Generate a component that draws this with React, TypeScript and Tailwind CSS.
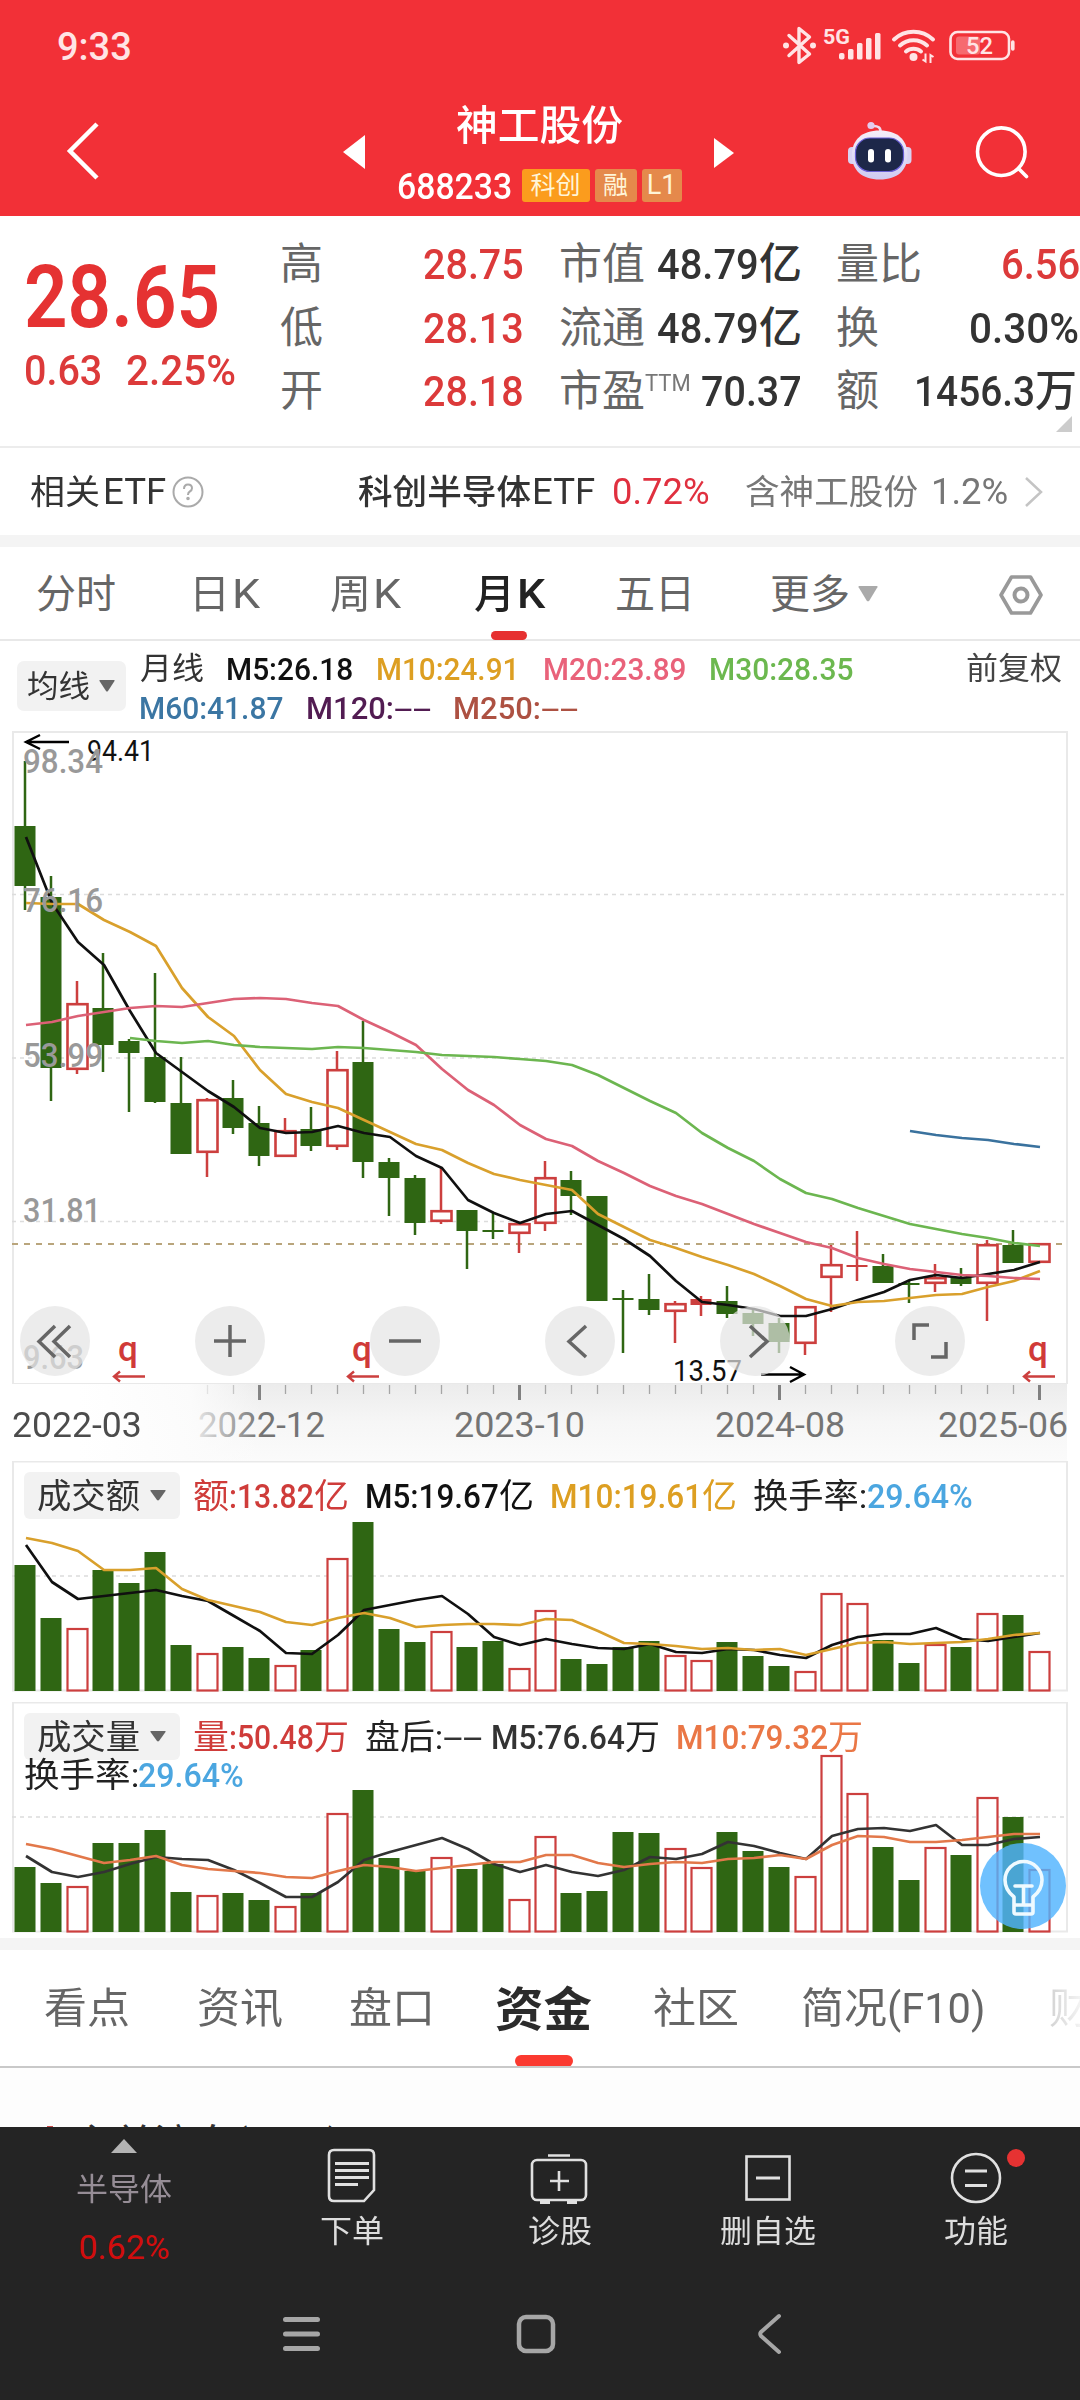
import { useLayoutEffect, useRef, type ReactNode } from "react";

/** A single line of text, stretched horizontally to fill the width of its box. */
function Fit({ className = "", children }: { className?: string; children: ReactNode }) {
  const outer = useRef<HTMLSpanElement>(null);
  const inner = useRef<HTMLSpanElement>(null);
  useLayoutEffect(() => {
    const o = outer.current;
    const i = inner.current;
    if (!o || !i) return;
    i.style.transform = `scaleX(${o.clientWidth / i.offsetWidth})`;
  });
  return (
    <span ref={outer} className={`block shrink-0 whitespace-nowrap leading-none ${className}`}>
      <span ref={inner} className="inline-block origin-left align-top leading-none">
        {children}
      </span>
    </span>
  );
}

function Caret({ className = "" }: { className?: string }) {
  return (
    <svg viewBox="0 0 16 12" className={className} fill="currentColor" preserveAspectRatio="none">
      <path d="M1 0h14q1 0 .5 1L9 11q-1 1-2 0L.5 1Q0 0 1 0z" />
    </svg>
  );
}

/* ---------- header ---------- */

function StatusIcons() {
  return (
    <svg width="240" height="50" viewBox="780 20 240 50" fill="none" stroke="#ffe4e5" className="shrink-0">
      <path d="M789 35.5l20.500 18.500-10.500 8.500v-34l10.500 8.500-20.500 18.500" strokeWidth="3.400" strokeLinejoin="round" strokeLinecap="round" />
      <g fill="#ffe4e5" stroke="none">
        <circle cx="786" cy="45.500" r="3" />
        <circle cx="813" cy="45.500" r="3" />
        <text x="823" y="44" fontSize="21" fontWeight="700" textLength="27" lengthAdjust="spacingAndGlyphs">5G</text>
        <rect x="839" y="53" width="5.500" height="6.500" rx="2" />
        <rect x="848" y="49" width="5.500" height="10.500" rx="1.500" />
        <rect x="857" y="43" width="5.500" height="16.500" rx="1.500" />
        <rect x="866" y="38" width="5.500" height="21.500" rx="1.500" />
        <rect x="875" y="33" width="5.500" height="26.500" rx="1.500" />
        <circle cx="913.500" cy="57" r="4" />
        <path d="M925.500 53.500v8l-3-2M930.500 63v-8l3 2" stroke="#ffe4e5" strokeWidth="2" fill="none" />
      </g>
      <path d="M894 39.500a28.500 28.500 0 0 1 39 0M900 45.500a20 20 0 0 1 27 0M906 51.500a11.500 11.500 0 0 1 15 0" strokeWidth="4" strokeLinecap="round" />
      <rect x="950.500" y="32" width="58.500" height="27" rx="7" strokeWidth="2.600" />
      <rect x="956" y="36.500" width="24" height="18" rx="3" fill="#f66a6f" stroke="none" />
      <path d="M1012.800 42v7" strokeWidth="3.600" strokeLinecap="round" />
      <text x="966" y="54" fontSize="24" fontWeight="500" fill="#ffe4e5" stroke="none" textLength="27" lengthAdjust="spacingAndGlyphs">52</text>
    </svg>
  );
}

function Robot() {
  return (
    <svg width="66" height="66" viewBox="846 118 66 66" className="shrink-0">
      <defs>
        <linearGradient id="shell" x1="0" y1="0" x2="0" y2="1">
          <stop offset="0" stopColor="#f6eef8" />
          <stop offset="1" stopColor="#cfcaf2" />
        </linearGradient>
      </defs>
      <path d="M880.500 132q.5-6.500-8-6" fill="none" stroke="#efd9ee" strokeWidth="2.600" />
      <circle cx="871" cy="125.500" r="3.600" fill="#e3cbee" />
      <rect x="848" y="147" width="9" height="17" rx="4" fill="#d9d2f2" />
      <rect x="902.500" y="147" width="9" height="17" rx="4" fill="#d9d2f2" />
      <path d="M879.700 130.500c18 0 27.800 9.500 27.800 24.500s-9.800 24.500-27.800 24.500-27.800-9.500-27.800-24.500 9.800-24.500 27.800-24.500z" fill="url(#shell)" />
      <rect x="855.500" y="138" width="48" height="33.500" rx="14.500" fill="#1d2749" stroke="#6a5fd6" strokeWidth="1.200" />
      <rect x="868" y="149" width="6" height="13.500" rx="3" fill="#fff" />
      <rect x="885" y="149" width="6" height="13.500" rx="3" fill="#fff" />
    </svg>
  );
}

function Header() {
  return (
    <header className="h-[216px] bg-[#f23037] text-white">
      <div className="flex h-[88px] items-center justify-between pl-[57px] pr-[60px] pt-[5px]">
        <Fit className="w-[75px] text-[38px] font-medium text-[#ffe4e5]">9:33</Fit>
        <div className="-mt-[4px]"><StatusIcons /></div>
      </div>
      <div className="flex h-[128px] items-start">
        <svg width="36" height="60" viewBox="0 0 36 60" className="ml-[64px] mt-[33px]" fill="none" stroke="#fff" strokeWidth="4.500">
          <path d="M33 3L6 30l27 27" />
        </svg>
        <svg width="22" height="34" viewBox="0 0 22 34" className="ml-[243px] mt-[47px]" fill="#fff"><path d="M22 0v34L0 17z" /></svg>
        <div className="ml-[31px] flex w-[286px] flex-col items-center">
          <Fit className="mt-[18px] w-[167px] text-[41px] font-medium">神工股份</Fit>
          <div className="mt-[22px] flex h-[33px] items-center">
            <Fit className="mt-px w-[115px] text-[37px] font-medium">688233</Fit>
            <span className="ml-[10px] flex h-[33px] w-[68px] items-center justify-center rounded-[3px] bg-[#fb9c1d] text-[25px] leading-none text-[#fff5d8]">科创</span>
            <span className="ml-[5px] flex h-[33px] w-[42px] items-center justify-center rounded-[3px] bg-[#e5894b] text-[25px] leading-none text-[#fff5d8]">融</span>
            <span className="ml-[5px] flex h-[33px] w-[40px] items-center justify-center rounded-[3px] bg-[#e5894b] text-[27px] leading-none text-[#fff5d8]">L1</span>
          </div>
        </div>
        <svg width="20" height="30" viewBox="0 0 20 30" className="ml-[32px] mt-[50px]" fill="#fff"><path d="M0 0v30l20-15z" /></svg>
        <div className="ml-[112px] mt-[30px]"><Robot /></div>
        <svg width="60" height="60" viewBox="972 122 60 60" className="ml-[60px] mt-[34px]" fill="none" stroke="#fff" strokeWidth="3.600" strokeLinecap="round">
          <circle cx="1001.300" cy="151.700" r="23.800" />
          <path d="M1018.500 168.500l8 8" />
        </svg>
      </div>
    </header>
  );
}

/* ---------- quote ---------- */

function Quote() {
  return (
    <section className="relative flex h-[232px] border-b-2 border-[#ececec] text-[43px] text-[#333]">
      <div className="w-[280px] pl-[24px] text-[#e53232]">
        <Fit className="mt-[37px] w-[196px] text-[88px] font-semibold">28.65</Fit>
        <div className="mt-[8px] flex text-[43px] font-medium text-[#dc3a3a]">
          <Fit className="w-[78px]">0.63</Fit>
          <Fit className="ml-[24px] w-[110px]">2.25%</Fit>
        </div>
      </div>
      <div className="flex flex-col pt-[17px] font-medium text-[#dc3a3a]">
        {[["高", "28.75"], ["低", "28.13"], ["开", "28.18"]].map(([k, v]) => (
          <div key={k} className="flex h-[63.500px] items-center">
            <Fit className="w-[43px] font-normal text-[#666]">{k}</Fit>
            <Fit className="ml-[100px] w-[101px]">{v}</Fit>
          </div>
        ))}
      </div>
      <div className="ml-[35px] flex flex-col pt-[17px] font-medium">
        {["市值", "流通"].map((k) => (
          <div key={k} className="flex h-[63.500px] items-center">
            <Fit className="w-[86px] font-normal text-[#666]">{k}</Fit>
            <Fit className="ml-[12px] w-[102px]">48.79</Fit>
            <Fit className="w-[43px]">亿</Fit>
          </div>
        ))}
        <div className="flex h-[63.500px] items-center">
          <Fit className="w-[86px] font-normal text-[#666]">市盈</Fit>
          <Fit className="-mt-[16px] w-[46px] text-[23px] font-normal text-[#777]">TTM</Fit>
          <Fit className="ml-[10px] w-[101px]">70.37</Fit>
        </div>
      </div>
      <div className="ml-[34px] flex flex-col pt-[17px] font-medium">
        <div className="flex h-[63.500px] items-center">
          <Fit className="w-[86px] font-normal text-[#666]">量比</Fit>
          <Fit className="ml-[79px] w-[79px] text-[#dc3a3a]">6.56</Fit>
        </div>
        <div className="flex h-[63.500px] items-center">
          <Fit className="w-[43px] font-normal text-[#666]">换</Fit>
          <Fit className="ml-[90px] w-[110px]">0.30%</Fit>
        </div>
        <div className="flex h-[63.500px] items-center">
          <Fit className="w-[43px] font-normal text-[#666]">额</Fit>
          <Fit className="ml-[35px] w-[121px]">1456.3</Fit>
          <Fit className="w-[42px]">万</Fit>
        </div>
      </div>
      <svg width="16" height="16" viewBox="0 0 16 16" className="absolute left-[1056px] top-[200px]" fill="#ccc"><path d="M16 0v16H0z" /></svg>
    </section>
  );
}

function EtfRow() {
  return (
    <section className="flex h-[87px] items-center pt-px text-[36px] text-[#333]">
      <Fit className="ml-[30px] w-[70px] text-[34px]">相关</Fit>
      <Fit className="ml-[3px] w-[63px]">ETF</Fit>
      <svg width="32" height="32" viewBox="0 0 32 32" className="ml-[6px]" fill="none" stroke="#aaa" strokeWidth="2">
        <circle cx="16" cy="16" r="14.500" />
        <path d="M12 13q0-4.500 4-4.500t4 3.800q0 2-2.200 3.200-1.800 1-1.800 3.500" />
        <circle cx="16" cy="22.500" r=".8" fill="#aaa" />
      </svg>
      <Fit className="ml-[154px] w-[173px] text-[34px] font-medium">科创半导体</Fit>
      <Fit className="ml-[1px] w-[63px]">ETF</Fit>
      <Fit className="ml-[17px] w-[98px] text-[#e0303f]">0.72%</Fit>
      <Fit className="ml-[35px] w-[173px] text-[34px] text-[#777]">含神工股份</Fit>
      <Fit className="ml-[13px] w-[77px] text-[#777]">1.2%</Fit>
      <svg width="20" height="32" viewBox="0 0 20 32" className="ml-[16px]" fill="none" stroke="#c4c4c4" strokeWidth="2.500"><path d="M2 2l15 14L2 30" /></svg>
    </section>
  );
}

/* ---------- period tabs and MA legend ---------- */

function PeriodTabs() {
  return (
    <nav className="relative flex h-[94px] items-center border-b-2 border-[#e8e8e8] pt-[3px] text-[40px] text-[#666]">
      <Fit className="ml-[36px] w-[80px]">分时</Fit>
      <Fit className="ml-[73px] w-[41px]">日</Fit>
      <Fit className="ml-[2px] w-[28px]">K</Fit>
      <Fit className="ml-[70px] w-[41px]">周</Fit>
      <Fit className="ml-[2px] w-[28px]">K</Fit>
      <Fit className="ml-[73px] w-[41px] font-medium text-[#222]">月</Fit>
      <Fit className="ml-[2px] w-[28px] font-medium text-[#222]">K</Fit>
      <Fit className="ml-[70px] w-[80px]">五日</Fit>
      <Fit className="ml-[75px] w-[80px]">更多</Fit>
      <Caret className="-mt-px ml-[8px] h-[16px] w-[20px] text-[#aaa]" />
      <svg width="44" height="42" viewBox="0 0 44 42" className="ml-[121px]" fill="none" stroke="#999" strokeWidth="3.600" strokeLinejoin="round">
        <path d="M12.500 3h19L42 21 31.500 39h-19L2 21z" />
        <circle cx="22" cy="21" r="6.500" strokeWidth="4" />
      </svg>
      <span className="absolute left-[491px] top-[84px] h-[9px] w-[36px] rounded-full bg-[#e63030]" />
    </nav>
  );
}

function MaLegend() {
  return (
    <div className="flex h-[90px] items-start text-[32px] font-medium">
      <div className="ml-[17px] mt-[20px] flex h-[50px] w-[109px] items-center rounded-[7px] bg-[#f2f2f2] text-[#333]">
        <Fit className="ml-[10px] w-[63px] text-[31px] font-normal">均线</Fit>
        <Caret className="ml-[9px] h-[12px] w-[16px] text-[#666]" />
      </div>
      <div className="ml-[14px] w-[800px]">
        <div className="mt-[12px] flex">
          <Fit className="w-[64px] text-[31px] font-normal text-[#333]">月线</Fit>
          <Fit className="ml-[22px] w-[127px] text-[#111]">M5:26.18</Fit>
          <Fit className="ml-[23px] w-[143px] text-[#dd9f22]">M10:24.91</Fit>
          <Fit className="ml-[24px] w-[143px] text-[#e9627a]">M20:23.89</Fit>
          <Fit className="ml-[23px] w-[144px] text-[#6cb84f]">M30:28.35</Fit>
        </div>
        <div className="mt-[7px] flex">
          <Fit className="-ml-px w-[144px] text-[#3b76a3]">M60:41.87</Fit>
          <Fit className="ml-[23px] w-[88px] text-[#521c52]">M120:</Fit>
          <Fit className="w-[38px] font-normal text-[#521c52]">--</Fit>
          <Fit className="ml-[21px] w-[88px] text-[#ad5142]">M250:</Fit>
          <Fit className="w-[38px] font-normal text-[#ad5142]">--</Fit>
        </div>
      </div>
      <Fit className="ml-[26px] mt-[12px] w-[96px] text-[31px] font-normal text-[#444]">前复权</Fit>
    </div>
  );
}

/* ---------- charts ---------- */

const X = (i: number) => 25 + 26 * i;
const GREEN = "#2f6613";
const RED = "#cc3f3e";

// [rising, high, body top, body bottom, low]
const candles: [number, number, number, number, number][] = [
  [0, 761, 826, 886, 910], [0, 876, 897, 1068, 1101], [1, 981, 1003, 1070, 1074], [0, 953, 1008, 1045, 1072],
  [0, 1039, 1041, 1053, 1112], [0, 973, 1057, 1102, 1103], [0, 1057, 1103, 1154, 1154], [1, 1098, 1099, 1153, 1177],
  [0, 1080, 1098, 1128, 1134], [0, 1106, 1123, 1156, 1166], [1, 1118, 1130, 1157, 1157], [0, 1107, 1129, 1146, 1151],
  [1, 1051, 1069, 1147, 1150], [0, 1021, 1062, 1162, 1178], [0, 1158, 1162, 1178, 1216], [0, 1175, 1178, 1223, 1235],
  [1, 1167, 1210, 1222, 1224], [0, 1210, 1210, 1231, 1269], [0, 1213, 1230, 1232, 1239], [1, 1223, 1223, 1234, 1253],
  [1, 1161, 1177, 1224, 1231], [0, 1171, 1180, 1196, 1215], [0, 1196, 1196, 1301, 1301], [0, 1290, 1298, 1300, 1353],
  [0, 1274, 1299, 1310, 1315], [1, 1301, 1303, 1312, 1343], [1, 1296, 1299, 1305, 1316], [0, 1286, 1301, 1314, 1318],
  [0, 1310, 1313, 1324, 1336], [0, 1318, 1323, 1342, 1353], [1, 1306, 1306, 1344, 1355], [1, 1245, 1264, 1278, 1312],
  [1, 1231, 1265, 1267, 1281], [0, 1254, 1266, 1283, 1283], [0, 1280, 1283, 1285, 1303], [1, 1264, 1277, 1284, 1292],
  [0, 1268, 1277, 1284, 1286], [1, 1240, 1244, 1284, 1321], [0, 1230, 1245, 1263, 1263], [1, 1243, 1243, 1263, 1263],
];

const ma5 = [837, 903, 942, 965, 1011, 1053, 1072, 1091, 1107, 1128, 1133, 1132, 1126, 1133, 1137, 1156, 1168, 1200, 1213, 1223, 1214, 1211, 1225, 1239, 1256, 1281, 1302, 1305, 1309, 1316, 1316, 1309, 1300, 1292, 1280, 1275, 1278, 1274, 1270, 1262];
const ma10 = [903, 904, 904, 920, 932, 946, 988, 1017, 1036, 1070, 1094, 1102, 1108, 1120, 1132, 1144, 1150, 1163, 1174, 1180, 1185, 1190, 1214, 1227, 1240, 1248, 1257, 1265, 1274, 1286, 1299, 1306, 1302, 1301, 1298, 1295, 1294, 1287, 1281, 1271];
const ma20 = [1025, 1022, 1016, 1012, 1008, 1006, 1007, 1003, 999, 998, 999, 1003, 1006, 1020, 1032, 1045, 1069, 1090, 1105, 1125, 1139, 1146, 1161, 1173, 1186, 1196, 1204, 1214, 1224, 1233, 1242, 1248, 1258, 1264, 1269, 1272, 1275, 1276, 1278, 1279];
const ma30 = [1038, 1041, 1043, 1041, 1045, 1047, 1048, 1049, 1047, 1048, 1050, 1052, 1055, 1056, 1057, 1059, 1061, 1065, 1075, 1088, 1101, 1113, 1133, 1148, 1161, 1179, 1193, 1199, 1208, 1216, 1224, 1229, 1234, 1238, 1243, 1246];
const ma60 = [1131, 1135, 1138, 1140, 1144, 1147];

const rising = [0, 0, 1, 0, 0, 0, 0, 1, 0, 0, 1, 0, 1, 0, 0, 0, 1, 0, 0, 1, 1, 0, 0, 0, 0, 1, 1, 0, 0, 0, 1, 1, 1, 0, 0, 1, 0, 1, 0, 1];

const turnover = [1565, 1618, 1628, 1570, 1583, 1552, 1645, 1653, 1647, 1658, 1665, 1650, 1558, 1522, 1629, 1642, 1631, 1647, 1641, 1668, 1610, 1659, 1664, 1647, 1641, 1655, 1660, 1642, 1656, 1666, 1671, 1593, 1603, 1640, 1663, 1644, 1647, 1613, 1615, 1651];
const turnover5 = [1545, 1582, 1599, 1596, 1593, 1590, 1596, 1601, 1616, 1631, 1653, 1654, 1635, 1610, 1605, 1600, 1596, 1614, 1637, 1645, 1639, 1644, 1648, 1649, 1644, 1652, 1653, 1649, 1650, 1655, 1658, 1645, 1637, 1634, 1634, 1628, 1639, 1641, 1637, 1633];
const turnover10 = [1538, 1543, 1551, 1570, 1570, 1568, 1589, 1600, 1606, 1612, 1622, 1625, 1618, 1613, 1618, 1627, 1625, 1624, 1624, 1625, 1619, 1620, 1631, 1643, 1644, 1646, 1649, 1648, 1650, 1649, 1655, 1649, 1643, 1642, 1644, 1643, 1642, 1639, 1635, 1633];

const volume = [1867, 1883, 1886, 1843, 1843, 1830, 1892, 1895, 1893, 1900, 1906, 1893, 1813, 1790, 1858, 1871, 1857, 1869, 1864, 1899, 1836, 1893, 1891, 1832, 1833, 1848, 1867, 1832, 1851, 1867, 1876, 1755, 1793, 1847, 1880, 1847, 1855, 1797, 1817, 1869];
const volume5 = [1856, 1872, 1877, 1872, 1864, 1857, 1859, 1860, 1870, 1883, 1897, 1897, 1882, 1860, 1852, 1845, 1838, 1849, 1864, 1872, 1865, 1872, 1876, 1870, 1857, 1859, 1854, 1842, 1846, 1853, 1859, 1836, 1829, 1828, 1831, 1825, 1845, 1845, 1839, 1837];
const volume10 = [1844, 1849, 1856, 1863, 1860, 1856, 1865, 1869, 1871, 1873, 1877, 1878, 1871, 1865, 1867, 1871, 1868, 1865, 1862, 1862, 1855, 1855, 1863, 1867, 1864, 1862, 1863, 1859, 1858, 1855, 1859, 1845, 1836, 1837, 1842, 1842, 1840, 1837, 1834, 1834];

function Line({ ys, from = 0, color }: { ys: number[]; from?: number; color: string }) {
  return (
    <polyline
      points={ys.map((y, i) => `${X(i + from) + 1},${y}`).join(" ")}
      fill="none"
      stroke={color}
      strokeWidth="2.700"
      strokeLinejoin="round"
    />
  );
}

function Label({ x, y, w, size, fill, children }: { x: number; y: number; w: number; size: number; fill: string; children: string }) {
  return (
    <text x={x} y={y} fontSize={size} fill={fill} textLength={w} lengthAdjust="spacingAndGlyphs">
      {children}
    </text>
  );
}

const controls = [
  "M35 20L19 35.500 35 51M50 20L34 35.500 50 51",
  "M35 19v32M19 35h32",
  "M19 35h32",
  "M41 20L24 35.500 41 51",
  "M30 20l17 15.500L30 51",
  "M19 34V19h15M36 51h15V36",
];

function PriceChart() {
  return (
    <section className="relative h-[653px]">
      <svg width="1080" height="653" viewBox="0 731 1080 653" className="block">
        <rect x="13" y="732" width="1054" height="652" fill="none" stroke="#e9e9e9" strokeWidth="2" />
        <g stroke="#dcdcdc" strokeWidth="1.300" strokeDasharray="4 4">
          <path d="M12 894.500H1066M12 1058H1066M12 1221.500H1066" />
        </g>
        <path d="M12 1244H1066" stroke="#b9a57c" strokeWidth="1.800" strokeDasharray="6 6" />
        {candles.map(([up, hi, top, bot, lo], i) => {
          const c = up ? RED : GREEN;
          const hollow = up && bot - top > 6;
          return (
            <g key={i} stroke={c} strokeWidth="2.500">
              <path d={`M${X(i)} ${hi}V${top}M${X(i)} ${bot}V${lo}`} />
              {hollow ? (
                <rect x={X(i) - 9.5} y={top + 1.2} width="20" height={bot - top - 2.4} fill="#fff" strokeWidth="2.600" />
              ) : (
                <rect x={X(i) - 10.5} y={top} width="21" height={bot - top} fill={c} stroke="none" />
              )}
            </g>
          );
        })}
        <Line ys={ma5} color="#101010" />
        <Line ys={ma10} color="#d9a02c" />
        <Line ys={ma20} color="#dc6176" />
        <Line ys={ma30} from={4} color="#6cb650" />
        <Line ys={ma60} from={34} color="#3a729e" />
        <g fill="none" stroke="#000" strokeWidth="2.400">
          <path d="M69 742H26M40 735L26 742l14 7" />
          <path d="M761 1374.500H804M790 1367l14 7.500-14 7.500" />
        </g>
        <Label x={87} y={761} w={67} size={30} fill="#111">94.41</Label>
        <Label x={673} y={1381} w={69} size={30} fill="#111">13.57</Label>
        <g fontWeight="500">
          <Label x={23} y={773} w={80} size={34} fill="#999">98.34</Label>
          <Label x={23} y={912} w={80} size={34} fill="#999">76.16</Label>
          <Label x={23} y={1067} w={80} size={34} fill="#999">53.99</Label>
          <Label x={23} y={1222} w={78} size={34} fill="#999">31.81</Label>
          <Label x={23} y={1369} w={61} size={34} fill="#999">9.63</Label>
        </g>
        {[4, 13, 39].map((i) => (
          <g key={i}>
            <text x={X(i) - 1} y="1361" textAnchor="middle" fontSize="35" fontWeight="500" fill="#d03a38">q</text>
            <path d={`M${X(i) + 16} 1376.500h-31m6-5l-6 5 6 5`} fill="none" stroke="#cc3f3e" strokeWidth="2.400" />
          </g>
        ))}
      </svg>
      <div className="absolute left-[20px] top-[575px] flex gap-[105px]">
        {controls.map((d) => (
          <button key={d} className="flex size-[70px] items-center justify-center rounded-full bg-[rgb(228_228_228/0.7)]">
            <svg width="70" height="70" viewBox="0 0 70 70" fill="none" stroke="#666" strokeWidth="3.500"><path d={d} /></svg>
          </button>
        ))}
      </div>
    </section>
  );
}

function DateAxis() {
  return (
    <div className="relative h-[77px] bg-white">
      <div className="mr-[13px] h-full bg-linear-to-b from-[#ececec] via-[#f6f6f6] to-[#fbfbfb]">
        <svg width="1080" height="77" viewBox="0 1384 1080 77" className="block">
          {Array.from({ length: 33 }, (_, k) => k + 7).map((i) => {
            const major = (i - 9) % 10 === 0;
            return <path key={i} d={`M${X(i) + 0.5} 1385v${major ? 15 : 9}`} stroke={major ? "#808080" : "#a6a6a6"} strokeWidth={major ? 3 : 1.3} />;
          })}
          <g>
            <Label x={198} y={1437} w={127} size={35} fill="#747474">2022-12</Label>
            <Label x={454} y={1437} w={131} size={35} fill="#747474">2023-10</Label>
            <Label x={715} y={1437} w={130} size={35} fill="#747474">2024-08</Label>
            <Label x={938} y={1437} w={130} size={35} fill="#747474">2025-06</Label>
          </g>
        </svg>
      </div>
      <div className="absolute inset-y-0 left-0 flex w-[262px] items-start bg-linear-to-r from-white from-30% via-[#fcfcfcee] via-72% to-transparent pt-[24px] font-normal">
        <Fit className="ml-[12px] w-[130px] text-[35px] text-[#4c4c4c]">2022-03</Fit>
      </div>
    </div>
  );
}

function Bars({ tops, m5, m10, c5, c10, bottom }: { tops: number[]; m5: number[]; m10: number[]; c5: string; c10: string; bottom: number }) {
  return (
    <>
      {tops.map((t, i) =>
        rising[i] ? (
          <rect key={i} x={X(i) - 9.5} y={t + 1} width="20" height={bottom - t - 1.5} fill="#fff" stroke={RED} strokeWidth="2.200" />
        ) : (
          <rect key={i} x={X(i) - 10.5} y={t} width="21" height={bottom - t} fill={GREEN} />
        ),
      )}
      <Line ys={m5} color={c5} />
      <Line ys={m10} color={c10} />
    </>
  );
}

function PanelPicker({ label }: { label: string }) {
  return (
    <div className="flex h-[47px] w-[156px] items-center rounded-[6px] bg-[#f2f2f2] text-[#333]">
      <Fit className="ml-[13px] w-[103px] text-[34px] font-normal">{label}</Fit>
      <Caret className="ml-[10px] h-[11px] w-[16px] text-[#666]" />
    </div>
  );
}

function TurnoverPanel() {
  return (
    <section className="relative h-[241px]">
      <svg width="1080" height="241" viewBox="0 1461 1080 241" className="block">
        <rect x="13" y="1461.500" width="1054" height="229" fill="none" stroke="#e9e9e9" strokeWidth="2" />
        <path d="M12 1576H1066" stroke="#dcdcdc" strokeWidth="1.300" strokeDasharray="4 4" />
        <Bars tops={turnover} m5={turnover5} m10={turnover10} c5="#101010" c10="#d9a02c" bottom={1691} />
      </svg>
      <div className="absolute left-[24px] top-[11px] flex items-center text-[34px] font-medium">
        <PanelPicker label="成交额" />
        <Fit className="ml-[13px] w-[36px] font-normal text-[#cf3c3a]">额</Fit>
        <Fit className="w-[85px] text-[#cf3c3a]">:13.82</Fit>
        <Fit className="w-[35px] font-normal text-[#cf3c3a]">亿</Fit>
        <Fit className="ml-[16px] w-[134px] text-[#111]">M5:19.67</Fit>
        <Fit className="w-[35px] font-normal text-[#111]">亿</Fit>
        <Fit className="ml-[16px] w-[152px] text-[#dd9f22]">M10:19.61</Fit>
        <Fit className="w-[35px] font-normal text-[#dd9f22]">亿</Fit>
        <Fit className="ml-[16px] w-[114px] font-normal text-[#222]">换手率:</Fit>
        <Fit className="w-[106px] text-[#4ba6e0]">29.64%</Fit>
      </div>
    </section>
  );
}

function VolumePanel() {
  return (
    <section className="relative h-[236px]">
      <svg width="1080" height="236" viewBox="0 1702 1080 236" className="block">
        <rect x="13" y="1702.500" width="1054" height="229" fill="none" stroke="#e9e9e9" strokeWidth="2" />
        <path d="M12 1817H1066" stroke="#dcdcdc" strokeWidth="1.300" strokeDasharray="4 4" />
        <Bars tops={volume} m5={volume5} m10={volume10} c5="#333" c10="#e2784a" bottom={1932} />
      </svg>
      <div className="absolute left-[24px] top-[11px] text-[34px] font-medium">
        <div className="flex items-center">
          <PanelPicker label="成交量" />
          <Fit className="ml-[13px] w-[36px] font-normal text-[#cf3c3a]">量</Fit>
          <Fit className="w-[85px] text-[#cf3c3a]">:50.48</Fit>
          <Fit className="w-[35px] font-normal text-[#cf3c3a]">万</Fit>
          <Fit className="ml-[16px] w-[78px] font-normal text-[#222]">盘后:</Fit>
          <Fit className="w-[40px] font-normal text-[#333]">--</Fit>
          <Fit className="ml-[8px] w-[134px] text-[#333]">M5:76.64</Fit>
          <Fit className="w-[35px] font-normal text-[#222]">万</Fit>
          <Fit className="ml-[16px] w-[152px] text-[#ea7746]">M10:79.32</Fit>
          <Fit className="w-[35px] font-normal text-[#ea7746]">万</Fit>
        </div>
        <div className="-mt-[2px] flex">
          <Fit className="w-[115px] font-normal text-[#222]">换手率:</Fit>
          <Fit className="-ml-px w-[106px] text-[#4ba6e0]">29.64%</Fit>
        </div>
      </div>
      <div className="absolute left-[980px] top-[141px] size-[86px] rounded-full bg-[rgb(80_179_254/0.82)]">
        <svg width="86" height="86" viewBox="0 0 86 86" fill="none" stroke="#effaff" strokeWidth="3.600" strokeLinejoin="round" strokeLinecap="round">
          <path d="M34 69V54Q25 47 25 37a18.500 18.500 0 0 1 37 0q0 10-9 17v15q0 2-2 2H36q-2 0-2-2zM34 62h19M35 43h17M43.500 43v19" />
        </svg>
      </div>
    </section>
  );
}

/* ---------- lower tabs, toolbar, system navigation ---------- */

function InfoTabs() {
  return (
    <nav className="relative flex h-[118px] items-center overflow-hidden border-b-2 border-[#c9c9c9] pt-[2px] text-[42px] text-[#666]">
      <Fit className="ml-[44px] w-[86px]">看点</Fit>
      <Fit className="ml-[67px] w-[86px]">资讯</Fit>
      <Fit className="ml-[66px] w-[86px]">盘口</Fit>
      <Fit className="ml-[60px] w-[97px] text-[47px] font-bold text-[#2b2b2b]">资金</Fit>
      <Fit className="ml-[61px] w-[86px]">社区</Fit>
      <Fit className="ml-[62px] w-[86px]">简况</Fit>
      <Fit className="w-[98px]">(F10)</Fit>
      <span className="ml-[64px] shrink-0 bg-linear-to-r from-[#d2d2d2] to-white bg-clip-text leading-none text-transparent">财</span>
      <span className="absolute left-[515px] top-[105px] h-[12px] w-[58px] rounded-[6px] bg-[#fb3a30]" />
    </nav>
  );
}

function Tool({ icon, label, width }: { icon: ReactNode; label: string; width: string }) {
  return (
    <div className="relative flex w-[208px] flex-col items-center">
      <svg width="64" height="60" viewBox="0 0 64 60" className="mt-[21px]" fill="none" stroke="#e0e0e0" strokeWidth="2.600">
        {icon}
      </svg>
      <Fit className={`mt-[8px] text-[31px] text-[#ddd] ${width}`}>{label}</Fit>
    </div>
  );
}

function Toolbar() {
  return (
    <div className="flex h-[150px]">
      <div className="flex w-[248px] flex-col items-center">
        <svg width="26" height="14" viewBox="0 0 26 14" className="mt-[12px]" fill="#b4b4b4"><path d="M13 0l13 14H0z" /></svg>
        <Fit className="mt-[21px] w-[96px] text-[31px] text-[#968d96]">半导体</Fit>
        <Fit className="mt-[25px] w-[91px] text-[34px] text-[#d20d0d]">0.62%</Fit>
      </div>
      <Tool
        label="下单"
        width="w-[64px]"
        icon={
          <>
            <path d="M14 2h35q5 0 5 5v35L44 53H14q-5 0-5-5V7q0-5 5-5z" />
            <path d="M15 15.500h34M15 22.500h34M15 29.500h34M15 36.500h23" strokeWidth="2.800" />
          </>
        }
      />
      <Tool
        label="诊股"
        width="w-[64px]"
        icon={
          <>
            <rect x="4" y="12" width="54" height="40" rx="5" />
            <path d="M20 7.500h22M31 23v20M22 33h19" />
            <path d="M12 54h10M39 54h10" strokeWidth="4" />
          </>
        }
      />
      <Tool
        label="删自选"
        width="w-[96px]"
        icon={
          <>
            <rect x="10.500" y="8.500" width="43" height="43" />
            <path d="M20 30h24" strokeWidth="3" />
          </>
        }
      />
      <Tool
        label="功能"
        width="w-[64px]"
        icon={
          <>
            <circle cx="32" cy="30" r="24" />
            <path d="M21 23h22M21 37.500h22" strokeWidth="3" />
          </>
        }
      />
      <span className="absolute left-[1007px] top-[2149px] size-[18px] rounded-full bg-[#e63232]" />
    </div>
  );
}

export default function App() {
  return (
    <div className="relative flex h-[2400px] w-[1080px] flex-col overflow-hidden bg-white font-[Roboto,'Noto_Sans_CJK_SC',sans-serif]">
      <Header />
      <Quote />
      <EtfRow />
      <div className="h-[12px] bg-[#f4f4f4]" />
      <PeriodTabs />
      <MaLegend />
      <PriceChart />
      <DateAxis />
      <TurnoverPanel />
      <VolumePanel />
      <div className="h-[12px] bg-[#f4f4f4]" />
      <InfoTabs />
      <div className="flex h-[59px] items-start overflow-hidden bg-[#fdfdfd] pt-[55px]">
        <span className="ml-[47px] mt-[3px] h-[20px] w-[6px] bg-[#c94a4a]" />
        <span className="ml-[21px] mt-[2px] whitespace-nowrap text-[40px] leading-none text-[#333]">主单流向(万元)</span>
      </div>
      <footer className="h-[273px] bg-[#242424]">
        <Toolbar />
        <div className="flex h-[114px] items-center">
          <svg width="38" height="40" viewBox="0 0 38 40" className="ml-[283px]" stroke="#a6a6a6" strokeWidth="5" strokeLinecap="round"><path d="M2.500 5.500h32M2.500 20h32M2.500 34.500h32" /></svg>
          <svg width="40" height="40" viewBox="0 0 40 40" className="ml-[195px]" fill="none" stroke="#a6a6a6" strokeWidth="4.500"><rect x="3" y="3" width="34" height="34" rx="7" /></svg>
          <svg width="26" height="42" viewBox="0 0 26 42" className="ml-[201px]" fill="none" stroke="#a6a6a6" strokeWidth="4" strokeLinecap="round" strokeLinejoin="round"><path d="M22 3L4 19q-1.500 2 0 4l18 16" /></svg>
        </div>
      </footer>
    </div>
  );
}
